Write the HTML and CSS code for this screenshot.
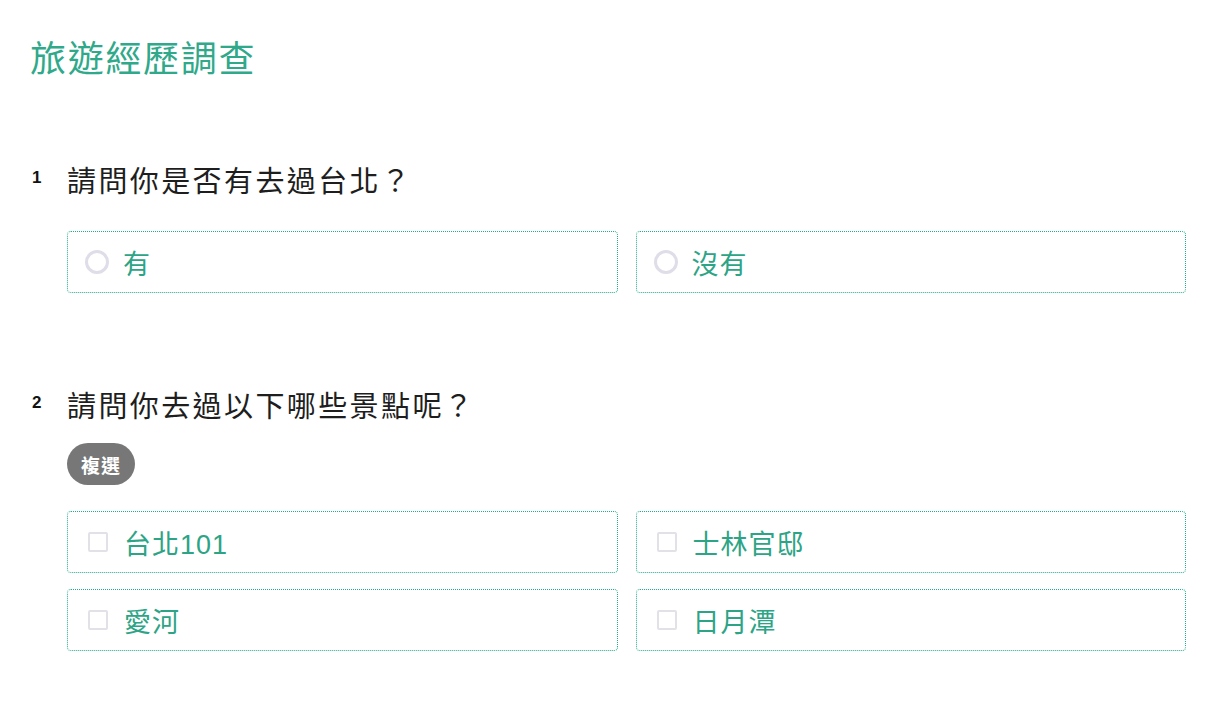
FILE: index.html
```html
<!DOCTYPE html>
<html lang="zh-Hant">
<head>
    <meta charset="UTF-8">
    <meta name="viewport" content="width=device-width, initial-scale=1.0">
    <title>旅遊經歷調查</title>
    <link rel="stylesheet" href="styles.css">
</head>
<body>

<div class="survey">
    <h1 class="survey-title">旅遊經歷調查</h1>

    <!-- Question 1: single choice -->
    <div class="question first">
        <div class="question-head">
            <span class="question-num">1</span>
            <span class="question-text">請問你是否有去過台北？</span>
        </div>
        <div class="options">
            <label class="option"><span class="radio"></span><span class="option-text">有</span></label>
            <label class="option"><span class="radio"></span><span class="option-text">沒有</span></label>
        </div>
    </div>

    <!-- Question 2: multiple choice -->
    <div class="question second">
        <div class="question-head">
            <span class="question-num">2</span>
            <span class="question-text">請問你去過以下哪些景點呢？</span>
        </div>
        <span class="badge">複選</span>
        <div class="options checks">
            <label class="option"><span class="checkbox"></span><span class="option-text">台北101</span></label>
            <label class="option"><span class="checkbox"></span><span class="option-text">士林官邸</span></label>
            <label class="option"><span class="checkbox"></span><span class="option-text">愛河</span></label>
            <label class="option"><span class="checkbox"></span><span class="option-text">日月潭</span></label>
        </div>
    </div>
</div>

</body>
</html>
```

FILE: styles.css
```css
body {
    margin: 0;
    background-color: #fff;
    font-family: "Liberation Sans", "Noto Sans CJK TC", sans-serif;
    color: #222;
}
.survey {
    padding: 36px 38px 0 30px;
}
.survey-title {
    margin: 0;
    font-size: 36px;
    line-height: 48px;
    font-weight: normal;
    letter-spacing: 1.7px;
    color: #2fa98a;
}
.question.first {
    margin-top: 79px;
}
.question.second {
    margin-top: 95px;
}
.question-head {
    display: flex;
    align-items: flex-start;
    height: 40px;
}
.question-num {
    width: 37px;
    margin-top: 5px;
    padding-left: 2px;
    box-sizing: border-box;
    font-size: 17px;
    line-height: 20px;
    font-weight: bold;
    color: #111;
}
.question-text {
    font-size: 29px;
    line-height: 38px;
    letter-spacing: 2.4px;
    color: #1e1e1e;
}
.badge {
    display: inline-flex;
    align-items: center;
    justify-content: center;
    width: 68px;
    height: 42px;
    margin: 15px 0 0 37px;
    border-radius: 21px;
    background-color: #777;
    color: #fff;
    font-size: 19px;
    font-weight: bold;
    letter-spacing: 1px;
}
.options {
    display: grid;
    grid-template-columns: 1fr 1fr;
    column-gap: 18px;
    row-gap: 16px;
    margin: 28px 0 0 37px;
}
.options.checks {
    margin-top: 26px;
}
.option {
    display: flex;
    align-items: center;
    height: 62px;
    padding: 0 17px;
    box-sizing: border-box;
    border: 1px dotted #1fae8a;
    border-radius: 4px;
    cursor: pointer;
}
.radio {
    width: 24px;
    height: 24px;
    box-sizing: border-box;
    border: 3px solid #dedde8;
    border-radius: 50%;
    margin-right: 14px;
}
.checkbox {
    width: 20px;
    height: 20px;
    box-sizing: border-box;
    border: 2px solid #e2e1e8;
    border-radius: 2px;
    margin: 0 16px 0 3px;
}
.option-text {
    font-size: 27px;
    letter-spacing: 1px;
    color: #2ca485;
}
```
